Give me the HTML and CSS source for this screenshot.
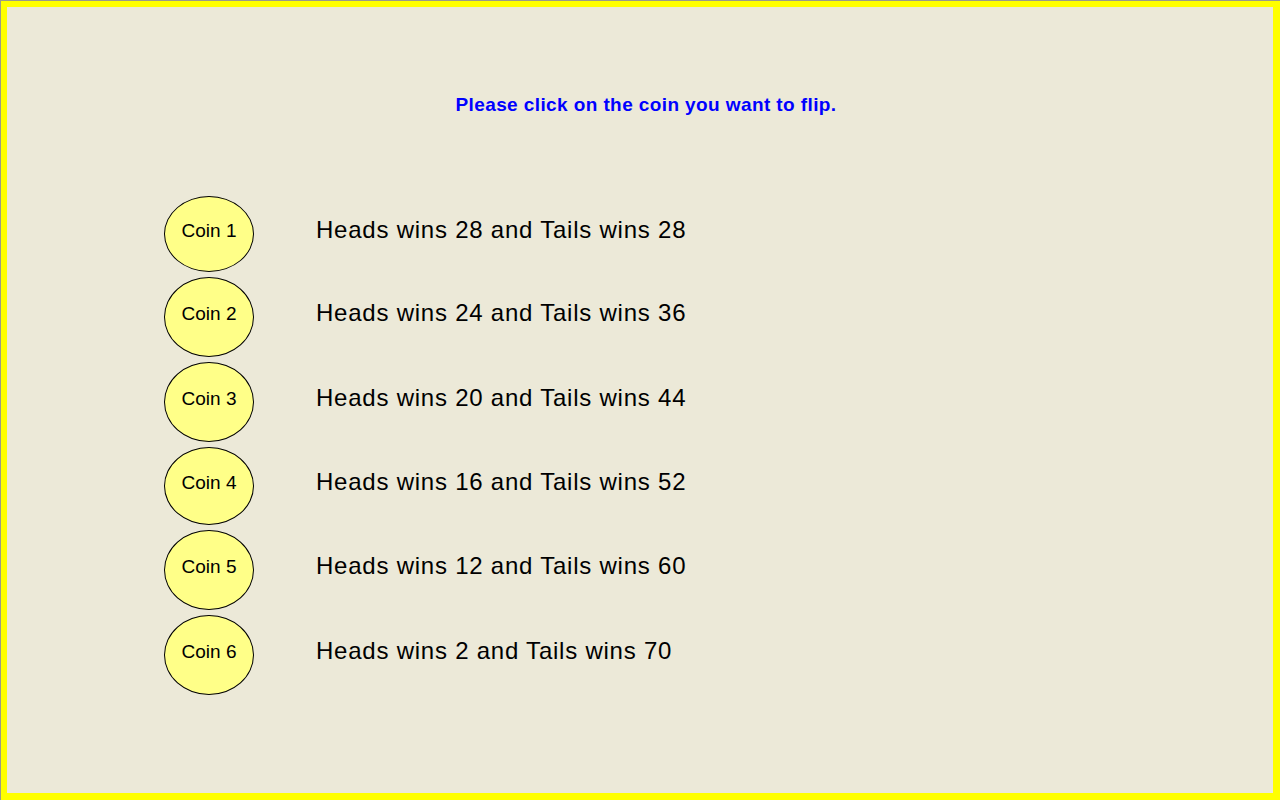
FILE: index.html
```html
<!DOCTYPE html>
<html>
<head>
<meta charset="utf-8">
<title>Coin flip</title>
<link rel="stylesheet" href="styles.css">
</head>
<body>
<div class="frame">
  <div class="panel">
    <h1 class="title">Please click on the coin you want to flip.</h1>
    <div class="coins">
      <div class="row row-first"><div class="coin">Coin 1</div><div class="odds">Heads wins 28 and Tails wins 28</div></div>
      <div class="row"><div class="coin">Coin 2</div><div class="odds">Heads wins 24 and Tails wins 36</div></div>
      <div class="row"><div class="coin">Coin 3</div><div class="odds">Heads wins 20 and Tails wins 44</div></div>
      <div class="row row-short"><div class="coin">Coin 4</div><div class="odds">Heads wins 16 and Tails wins 52</div></div>
      <div class="row"><div class="coin">Coin 5</div><div class="odds">Heads wins 12 and Tails wins 60</div></div>
      <div class="row"><div class="coin">Coin 6</div><div class="odds">Heads wins 2 and Tails wins 70</div></div>
    </div>
  </div>
</div>
</body>
</html>
```
FILE: styles.css
```css
html, body {
  margin: 0;
  padding: 0;
}
body {
  width: 1280px;
  height: 800px;
  overflow: hidden;
  background: #ece9d8;
  font-family: "Liberation Sans", Arial, sans-serif;
}
.frame {
  box-sizing: border-box;
  width: 1280px;
  height: 800px;
  border-top: 1px solid #9a9a8a;
  border-left: 1px solid #9a9a8a;
}
.panel {
  box-sizing: border-box;
  width: 100%;
  height: 100%;
  background: #ece9d8;
  border-style: solid;
  border-color: #ffff00;
  border-width: 6px 7px 7px 6px;
  display: flex;
  flex-direction: column;
}
.title {
  margin: 87px 0 0 0;
  padding-left: 12px;
  font-size: 19px;
  line-height: 21px;
  letter-spacing: 0.4px;
  font-weight: bold;
  color: #0000ff;
  text-align: center;
}
.coins {
  margin-top: 81px;
  padding-left: 157px;
  display: flex;
  flex-direction: column;
  gap: 5px;
}
.row {
  display: flex;
  align-items: center;
  height: 80px;
}
.row-first {
  height: 76px;
}
.row-short {
  height: 78px;
}
.coin {
  box-sizing: border-box;
  width: 90px;
  height: 100%;
  border: 1px solid #000;
  border-radius: 50%;
  background: #ffff88;
  display: flex;
  align-items: center;
  justify-content: center;
  padding-bottom: 7px;
  font-size: 19px;
  color: #000;
}
.odds {
  margin-left: 62px;
  padding-bottom: 8px;
  font-size: 24px;
  letter-spacing: 0.77px;
  color: #000;
}
```
